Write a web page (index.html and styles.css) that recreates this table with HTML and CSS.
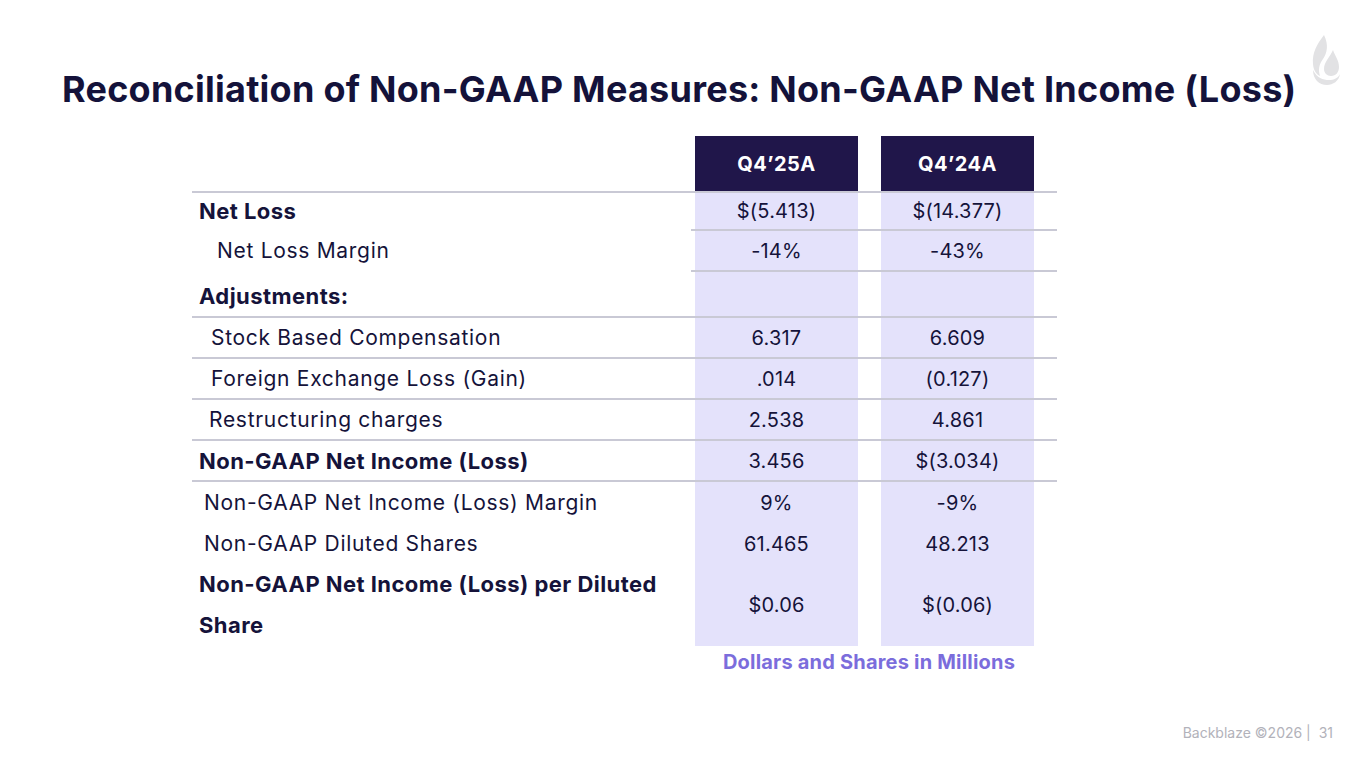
FILE: index.html
```html
<!DOCTYPE html>
<html lang="en">
<head>
<meta charset="utf-8">
<title>Reconciliation of Non-GAAP Measures</title>
<link rel="stylesheet" href="styles.css">
</head>
<body>
<div class="slide">
  <svg class="logo" viewBox="0 0 34 54" width="34" height="54" aria-hidden="true">
    <path d="M16 2 C 9 11, 4 20, 5 31 C 5.5 37, 8 41, 12 43 C 10 37, 11 31, 15 26 C 19 20, 21 12, 16 2 Z" fill="#e2e2e4"/>
    <path d="M25 17 C 22 24, 16 29, 16 36 C 16 40, 19 43, 23 43 C 28 43, 31 39, 31 34 C 31 27, 27 23, 25 17 Z" fill="#e2e2e4"/>
    <path d="M5 37 C 9 45, 15 47, 21 47 C 26 47, 30 45, 32 41 C 31 48, 25 52, 19 52 C 11 52, 5 46, 5 37 Z" fill="#e2e2e4"/>
  </svg>
  <h1 class="title">Reconciliation of Non-GAAP Measures: Non-GAAP Net Income (Loss)</h1>

  <div class="table">
    <div class="row head">
      <div class="lbl"></div>
      <div class="val hd">Q4’25A</div>
      <div class="sp"></div>
      <div class="val hd">Q4’24A</div>
      <div class="sp"></div>
    </div>
    <div class="row partial r38">
      <div class="lbl b">Net Loss</div>
      <div class="val">$(5.413)</div>
      <div class="sp"></div>
      <div class="val">$(14.377)</div>
      <div class="sp"></div>
    </div>
    <div class="row partial">
      <div class="lbl i18">Net Loss Margin</div>
      <div class="val">-14%</div>
      <div class="sp"></div>
      <div class="val">-43%</div>
      <div class="sp"></div>
    </div>
    <div class="row line r46">
      <div class="lbl b low">Adjustments:</div>
      <div class="val"></div>
      <div class="sp"></div>
      <div class="val"></div>
      <div class="sp"></div>
    </div>
    <div class="row line">
      <div class="lbl i12">Stock Based Compensation</div>
      <div class="val">6.317</div>
      <div class="sp"></div>
      <div class="val">6.609</div>
      <div class="sp"></div>
    </div>
    <div class="row line">
      <div class="lbl i12">Foreign Exchange Loss (Gain)</div>
      <div class="val">.014</div>
      <div class="sp"></div>
      <div class="val">(0.127)</div>
      <div class="sp"></div>
    </div>
    <div class="row line">
      <div class="lbl i10">Restructuring charges</div>
      <div class="val">2.538</div>
      <div class="sp"></div>
      <div class="val">4.861</div>
      <div class="sp"></div>
    </div>
    <div class="row line">
      <div class="lbl b">Non-GAAP Net Income (Loss)</div>
      <div class="val">3.456</div>
      <div class="sp"></div>
      <div class="val">$(3.034)</div>
      <div class="sp"></div>
    </div>
    <div class="row">
      <div class="lbl i5">Non-GAAP Net Income (Loss) Margin</div>
      <div class="val">9%</div>
      <div class="sp"></div>
      <div class="val">-9%</div>
      <div class="sp"></div>
    </div>
    <div class="row">
      <div class="lbl i5">Non-GAAP Diluted Shares</div>
      <div class="val">61.465</div>
      <div class="sp"></div>
      <div class="val">48.213</div>
      <div class="sp"></div>
    </div>
    <div class="row r80">
      <div class="lbl b wrap">Non-GAAP Net Income (Loss) per Diluted Share</div>
      <div class="val">$0.06</div>
      <div class="sp"></div>
      <div class="val">$(0.06)</div>
      <div class="sp"></div>
    </div>
    <div class="note">Dollars and Shares in Millions</div>
  </div>

  <div class="footer">Backblaze ©2026 |&nbsp; 31</div>
</div>
</body>
</html>
```
FILE: styles.css
```css
* { box-sizing: border-box; }
html, body { margin: 0; padding: 0; background: #ffffff; }
body { font-family: "Inter", "Liberation Sans", sans-serif; color: #15133a; }

.slide {
  position: relative;
  width: 1365px;
  height: 768px;
  overflow: hidden;
  display: flex;
  flex-direction: column;
  padding: 64px 0 0 62px;
}

.logo {
  position: absolute;
  left: 1308px;
  top: 33px;
}

.title {
  margin: 0;
  font-family: "Inter", "Liberation Sans", sans-serif;
  font-weight: 700;
  font-size: 36px;
  line-height: 50px;
  letter-spacing: 0.25px;
  color: #14123a;
  white-space: nowrap;
}

.table {
  margin: 22px 0 0 130px;
  width: 865px;
  display: flex;
  flex-direction: column;
}

.row {
  display: grid;
  grid-template-columns: 503px 163px 23px 153px 23px;
  height: 41px;
  font-size: 20px;
}
.row.head { height: 57px; border-bottom: 2px solid #c9c9d5; }
.row.line { border-bottom: 2px solid #c9c9d5; }
.row.partial {
  border-bottom: 2px solid transparent;
  background: linear-gradient(#c9c9d5, #c9c9d5) no-repeat right bottom / 366px 2px;
  background-origin: border-box;
  background-clip: border-box;
}
.row.r38 { height: 38px; }
.row.r46 { height: 46px; }
.row.r80 { height: 80px; }

.lbl {
  display: flex;
  align-items: center;
  padding-left: 7px;
  font-size: 21px;
  letter-spacing: 0.7px;
  color: #15133a;
  white-space: nowrap;
}
.lbl.b { font-weight: 700; font-size: 22px; letter-spacing: 0.45px; }
.lbl.low { padding-top: 4px; }
.lbl.i18 { padding-left: 25px; }
.lbl.i12 { padding-left: 19px; }
.lbl.i10 { padding-left: 17px; }
.lbl.i5 { padding-left: 12px; }
.lbl.wrap { white-space: normal; line-height: 41px; padding-right: 10px; }

.val {
  display: flex;
  align-items: center;
  justify-content: center;
  background: #e4e2fb;
  color: #15133a;
  letter-spacing: 0.2px;
}
.val.hd {
  background: #20164a;
  color: #ffffff;
  font-weight: 700;
  font-size: 20px;
  letter-spacing: 0.5px;
}

.note {
  align-self: flex-end;
  width: 366px;
  padding-right: 10px;
  text-align: center;
  margin-top: 6px;
  font-size: 20px;
  font-weight: 700;
  letter-spacing: 0.2px;
  color: #7b6ddc;
}

.footer {
  position: absolute;
  right: 32px;
  top: 724px;
  font-size: 14px;
  color: #b2b2ba;
}
```
